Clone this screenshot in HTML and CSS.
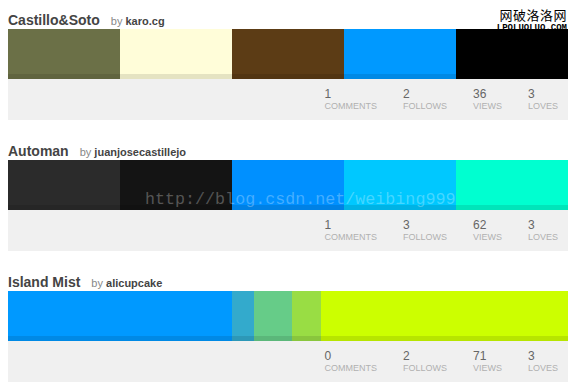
FILE: index.html
```html
<!DOCTYPE html>
<html>
<head>
<meta charset="utf-8">
<link rel="stylesheet" href="styles.css">
</head>
<body>
<div class="list">
  <div class="palette">
    <div class="title"><span class="name">Castillo&amp;Soto</span><span class="by">by <b>karo.cg</b></span></div>
    <div class="bar">
      <div class="sw" style="width:20%;background:#6b7047"></div>
      <div class="sw" style="width:20%;background:#fffdd9"></div>
      <div class="sw" style="width:20%;background:#5c3c15"></div>
      <div class="sw" style="width:20%;background:#0099ff"></div>
      <div class="sw" style="width:20%;background:#000000"></div>
    </div>
    <div class="stats">
      <div class="stat"><div class="num">1</div><div class="lbl">Comments</div></div>
      <div class="stat"><div class="num">2</div><div class="lbl">Follows</div></div>
      <div class="stat"><div class="num">36</div><div class="lbl">Views</div></div>
      <div class="stat"><div class="num">3</div><div class="lbl">Loves</div></div>
    </div>
  </div>
  <div class="palette">
    <div class="title"><span class="name">Automan</span><span class="by">by <b>juanjosecastillejo</b></span></div>
    <div class="bar">
      <div class="sw" style="width:20%;background:#2b2b2b"></div>
      <div class="sw" style="width:20%;background:#141414"></div>
      <div class="sw" style="width:20%;background:#0090ff"></div>
      <div class="sw" style="width:20%;background:#00c8ff"></div>
      <div class="sw" style="width:20%;background:#00ffd0"></div>
    </div>
    <div class="stats">
      <div class="stat"><div class="num">1</div><div class="lbl">Comments</div></div>
      <div class="stat"><div class="num">3</div><div class="lbl">Follows</div></div>
      <div class="stat"><div class="num">62</div><div class="lbl">Views</div></div>
      <div class="stat"><div class="num">3</div><div class="lbl">Loves</div></div>
    </div>
  </div>
  <div class="palette">
    <div class="title"><span class="name">Island Mist</span><span class="by">by <b>alicupcake</b></span></div>
    <div class="bar">
      <div class="sw" style="width:224px;background:#0099ff"></div>
      <div class="sw" style="width:22px;background:#33aacc"></div>
      <div class="sw" style="width:38px;background:#66cc88"></div>
      <div class="sw" style="width:29px;background:#99dd44"></div>
      <div class="sw" style="width:247px;background:#ccff00"></div>
    </div>
    <div class="stats">
      <div class="stat"><div class="num">0</div><div class="lbl">Comments</div></div>
      <div class="stat"><div class="num">2</div><div class="lbl">Follows</div></div>
      <div class="stat"><div class="num">71</div><div class="lbl">Views</div></div>
      <div class="stat"><div class="num">3</div><div class="lbl">Loves</div></div>
    </div>
  </div>
</div>
<div class="mark-site"><div class="mark-cn">网破洛洛网</div><div class="mark-url">LPOLUOLUO.COM</div></div>
<div class="mark-blog">http://blog.csdn.net/weibing999</div>
</body>
</html>
```
FILE: styles.css
```css
html, body {
  margin: 0;
  padding: 0;
  background: #ffffff;
}
body {
  padding: 10px 8px 0 8px;
  font-family: "Liberation Sans", Arial, sans-serif;
  position: relative;
  width: 560px;
}
.list {
  display: flex;
  flex-direction: column;
  gap: 21px;
}
.palette {
  display: flex;
  flex-direction: column;
}
.title {
  height: 19px;
  line-height: 19px;
  white-space: nowrap;
}
.name {
  font-size: 14px;
  font-weight: bold;
  color: #444444;
}
.by {
  font-size: 11px;
  color: #888888;
  margin-left: 11px;
}
.by b {
  color: #444444;
}
.bar {
  display: flex;
  height: 50px;
}
.sw {
  height: 50px;
  box-shadow: inset 0 -5px 0 rgba(0, 0, 0, 0.1);
}
.stats {
  height: 41px;
  background: #f0f0f0;
  display: flex;
  justify-content: flex-end;
  gap: 26px;
  padding: 8px 10px 0 0;
  box-sizing: border-box;
}
.num {
  font-size: 12px;
  line-height: 14px;
  color: #666666;
}
.lbl {
  font-size: 9px;
  line-height: 11px;
  color: #b0b0b0;
  text-transform: uppercase;
}
.mark-site {
  position: absolute;
  top: 7px;
  right: 9px;
  text-align: right;
  color: #000000;
}
.mark-cn {
  font-family: "Noto Sans CJK SC", sans-serif;
  font-size: 13px;
  line-height: 16px;
  letter-spacing: 0.5px;
}
.mark-url {
  font-family: "Liberation Mono", monospace;
  font-size: 9px;
  font-weight: bold;
  line-height: 11px;
}
.mark-blog {
  position: absolute;
  top: 190px;
  left: 145px;
  font-family: "Liberation Mono", monospace;
  font-size: 16.7px;
  line-height: 20px;
  color: rgba(255, 255, 255, 0.28);
  white-space: nowrap;
}
```
